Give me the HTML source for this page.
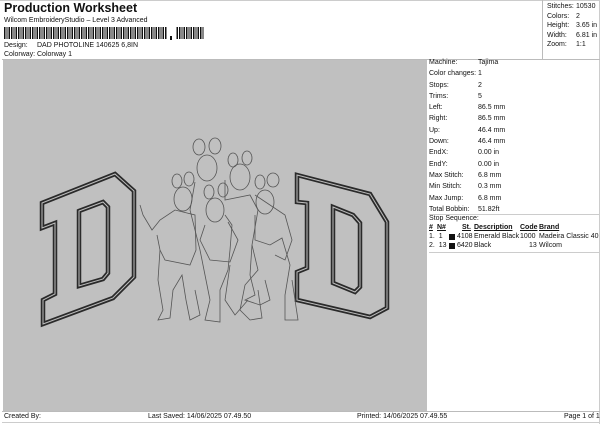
<!DOCTYPE html>
<html><head><style>
*{margin:0;padding:0;box-sizing:border-box}
body{width:600px;height:424px;background:#fff;font-family:"Liberation Sans",Arial,sans-serif;font-size:7px;color:#111;position:relative;overflow:hidden}
.a{position:absolute;white-space:nowrap}
.t td{padding:0;height:11.3px;line-height:11.3px;font-size:7px}
</style></head><body>
<div class="a" style="left:4px;top:1px;font-size:12.5px;font-weight:bold">Production Worksheet</div>
<div class="a" style="left:4px;top:17px;font-size:7px">Wilcom EmbroideryStudio – Level 3 Advanced</div>
<svg class="a" style="left:4px;top:27px" width="200" height="14">
<defs><pattern id="bc" width="7" height="12" patternUnits="userSpaceOnUse"><rect x="0" width="1.5" height="12" fill="#111"/><rect x="2.5" width="1" height="12" fill="#111"/><rect x="4.5" width="1.5" height="12" fill="#111"/></pattern></defs>
<rect x="0" y="0" width="163" height="12" fill="url(#bc)"/>
<rect x="166" y="9" width="2" height="4" fill="#111"/>
<rect x="172" y="0" width="30" height="12" fill="url(#bc)"/>
</svg>
<div class="a" style="left:4px;top:42px">Design:</div><div class="a" style="left:37px;top:42px">DAD PHOTOLINE 140625 6,8IN</div>
<div class="a" style="left:4px;top:51px">Colorway:</div><div class="a" style="left:37px;top:51px">Colorway 1</div>
<div class="a" style="left:0;top:0;width:600px;height:1px;background:#ccc"></div>
<div class="a" style="left:542px;top:0;width:1px;height:60px;background:#bbb"></div>
<div class="a" style="left:599px;top:0;width:1px;height:424px;background:#ccc"></div>
<div class="a" style="left:547px;top:2px;line-height:9.6px">Stitches:<br>Colors:<br>Height:<br>Width:<br>Zoom:</div>
<div class="a" style="left:576px;top:2px;line-height:9.6px">10530<br>2<br>3.65 in<br>6.81 in<br>1:1</div>
<div class="a" style="left:2px;top:59px;width:598px;height:1px;background:#bbb"></div>
<div class="a" style="left:3px;top:60px;width:424px;height:351px;background:#c0c0c0"></div>
<svg class="a" style="left:0;top:0" width="430" height="412">
<g fill="none" stroke="#2a2a2a" stroke-width="4.5" stroke-linejoin="miter">
<path d="M42,203 L115,174 L134,191 L134,277 L113,298 L43,324 L43,300 L55,294 L55,223 L42,228 Z"/>
<path d="M79,211 L103,202 L108,207 L108,273 L103,279 L79,286 Z"/>
<path d="M297,175 L370,194 L387,222 L387,308 L370,317 L297,300 L297,272 L307,268 L307,203 L297,202 Z"/>
<path d="M333,207 L353,215 L360,223 L360,287 L355,292 L333,283 Z"/>
</g>
<g fill="none" stroke="#bdbdbd" stroke-width="1">
<path d="M42,203 L115,174 L134,191 L134,277 L113,298 L43,324 L43,300 L55,294 L55,223 L42,228 Z"/>
<path d="M79,211 L103,202 L108,207 L108,273 L103,279 L79,286 Z"/>
<path d="M297,175 L370,194 L387,222 L387,308 L370,317 L297,300 L297,272 L307,268 L307,203 L297,202 Z"/>
<path d="M333,207 L353,215 L360,223 L360,287 L355,292 L333,283 Z"/>
</g>
<g fill="none" stroke="#555" stroke-width="0.8">
<ellipse cx="183" cy="199" rx="9" ry="12"/><ellipse cx="177" cy="181" rx="5" ry="7"/><ellipse cx="189" cy="179" rx="5" ry="7"/>
<ellipse cx="207" cy="168" rx="10" ry="13"/><ellipse cx="199" cy="147" rx="6" ry="8"/><ellipse cx="215" cy="146" rx="6" ry="8"/>
<ellipse cx="240" cy="177" rx="10" ry="13"/><ellipse cx="233" cy="160" rx="5" ry="7"/><ellipse cx="247" cy="158" rx="5" ry="7"/>
<ellipse cx="215" cy="210" rx="9" ry="12"/><ellipse cx="209" cy="192" rx="5" ry="7"/><ellipse cx="223" cy="190" rx="5" ry="7"/>
<ellipse cx="265" cy="202" rx="9" ry="12"/><ellipse cx="260" cy="182" rx="5" ry="7"/><ellipse cx="273" cy="180" rx="6" ry="7"/>
<path d="M140,205 L143,215 L152,230 L160,220 L175,210 L195,215 L196,250 L190,265 L165,260 L160,250 L157,235"/>
<path d="M160,250 L158,280 L163,310 L158,320 L170,318 L173,290 L182,275 L186,300 L190,320 L200,315 L195,290"/>
<path d="M195,182 L190,210 L200,250 L205,275 L210,300 L205,320 L220,322 L220,290 L228,270 L230,250 L232,225 L225,215"/>
<path d="M205,225 L200,240 L210,260 L230,262 L238,240 L228,222"/>
<path d="M225,180 L225,200 L250,195 L258,210 L252,245 L258,270 L245,285 L240,310 L250,320 L262,318 L258,290"/>
<path d="M255,195 L285,215 L292,240 L285,260 L275,255"/>
<path d="M255,215 L255,240 L270,245 L282,238 L290,265 L285,295 L285,320 L298,320 L292,280"/>
<path d="M252,245 L250,275 L255,295 L245,300 L260,305 L270,300 L265,280"/>
<path d="M230,265 L225,300 L235,315 L248,300"/>
</g>
</svg>
<div class="a" style="left:427px;top:60px;width:172px;height:351px;background:#fff"></div>
<table class="a t" style="left:429px;top:57px;border-collapse:collapse">
<tr><td style="width:49px">Machine:</td><td>Tajima</td></tr>
<tr><td>Color changes:</td><td>1</td></tr>
<tr><td>Stops:</td><td>2</td></tr>
<tr><td>Trims:</td><td>5</td></tr>
<tr><td>Left:</td><td>86.5 mm</td></tr>
<tr><td>Right:</td><td>86.5 mm</td></tr>
<tr><td>Up:</td><td>46.4 mm</td></tr>
<tr><td>Down:</td><td>46.4 mm</td></tr>
<tr><td>EndX:</td><td>0.00 in</td></tr>
<tr><td>EndY:</td><td>0.00 in</td></tr>
<tr><td>Max Stitch:</td><td>6.8 mm</td></tr>
<tr><td>Min Stitch:</td><td>0.3 mm</td></tr>
<tr><td>Max Jump:</td><td>6.8 mm</td></tr>
<tr><td>Total Bobbin:</td><td>51.82ft</td></tr>
</table>
<div class="a" style="left:429px;top:214px;width:170px;height:1px;background:#ccc"></div>
<div class="a" style="left:429px;top:215px">Stop Sequence:</div>
<div class="a" style="left:429px;top:224px;font-weight:bold;text-decoration:underline">#</div>
<div class="a" style="left:437px;top:224px;font-weight:bold;text-decoration:underline">N#</div>
<div class="a" style="left:462px;top:224px;font-weight:bold;text-decoration:underline">St.</div>
<div class="a" style="left:474px;top:224px;font-weight:bold;text-decoration:underline">Description</div>
<div class="a" style="left:520px;top:224px;font-weight:bold;text-decoration:underline">Code</div>
<div class="a" style="left:539px;top:224px;font-weight:bold;text-decoration:underline">Brand</div>
<div class="a" style="left:429px;top:233px">1.&nbsp; 1</div><div class="a" style="left:449px;top:234px;width:6px;height:6px;background:#111"></div>
<div class="a" style="left:457px;top:233px">4108</div><div class="a" style="left:474px;top:233px">Emerald Black</div><div class="a" style="left:520px;top:233px">1000</div><div class="a" style="left:539px;top:233px">Madeira Classic 40</div>
<div class="a" style="left:429px;top:242px">2.&nbsp; 13</div><div class="a" style="left:449px;top:243px;width:6px;height:6px;background:#111"></div>
<div class="a" style="left:457px;top:242px">6420</div><div class="a" style="left:474px;top:242px">Black</div><div class="a" style="left:529px;top:242px">13</div><div class="a" style="left:539px;top:242px">Wilcom</div>
<div class="a" style="left:429px;top:252px;width:170px;height:1px;background:#ccc"></div>
<div class="a" style="left:2px;top:411px;width:598px;height:1px;background:#bbb"></div>
<div class="a" style="left:2px;top:422px;width:598px;height:1px;background:#ccc"></div>
<div class="a" style="left:4px;top:413px">Created By:</div>
<div class="a" style="left:148px;top:413px">Last Saved: 14/06/2025 07.49.50</div>
<div class="a" style="left:357px;top:413px">Printed: 14/06/2025 07.49.55</div>
<div class="a" style="left:564px;top:413px">Page 1 of 1</div>
</body></html>
